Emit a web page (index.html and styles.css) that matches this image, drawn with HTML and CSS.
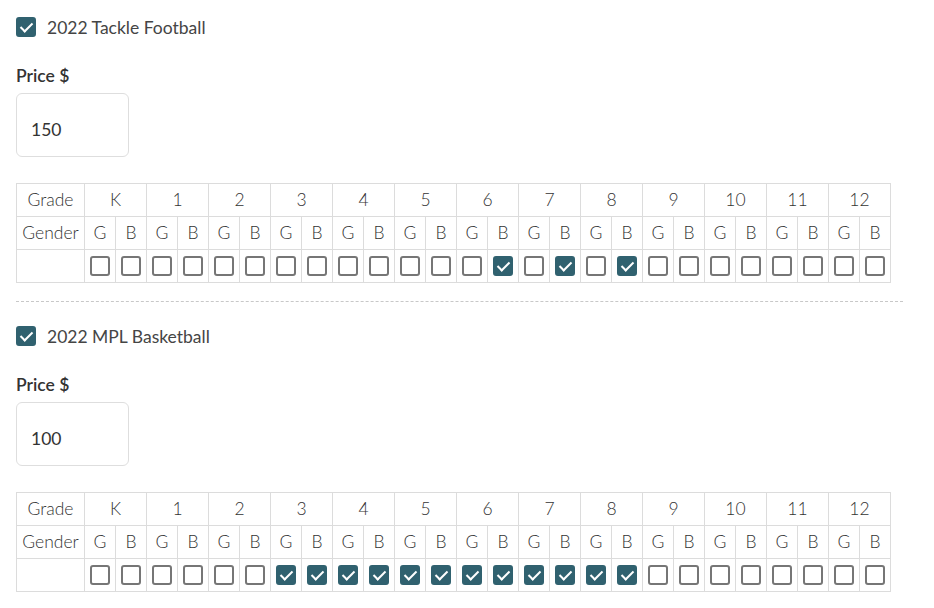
FILE: index.html
```html
<!DOCTYPE html>
<html lang="en">

<head>
    <meta charset="UTF-8" />
    <meta name="viewport" content="width=device-width, initial-scale=1" />
    <title>Program Pricing</title>
    <link rel="stylesheet" href="styles.css">
</head>

<body>
    <div class="programs">
        <!-- Tackle football -->
        <section class="program">
            <label class="program-check">
                <input type="checkbox" class="check" checked />
                <span>2022 Tackle Football</span>
            </label>
            <label class="price-label" for="price1">Price $</label>
            <input type="text" id="price1" class="price-input" value="150" />
            <table class="grade-table">
                <colgroup>
                    <col class="col-label" />
                    <col span="26" class="col-box" />
                </colgroup>
                <tr>
                    <td>Grade</td>
                    <td colspan="2">K</td>
                    <td colspan="2">1</td>
                    <td colspan="2">2</td>
                    <td colspan="2">3</td>
                    <td colspan="2">4</td>
                    <td colspan="2">5</td>
                    <td colspan="2">6</td>
                    <td colspan="2">7</td>
                    <td colspan="2">8</td>
                    <td colspan="2">9</td>
                    <td colspan="2">10</td>
                    <td colspan="2">11</td>
                    <td colspan="2">12</td>
                </tr>
                <tr>
                    <td>Gender</td>
                    <td>G</td><td>B</td><td>G</td><td>B</td><td>G</td><td>B</td><td>G</td><td>B</td>
                    <td>G</td><td>B</td><td>G</td><td>B</td><td>G</td><td>B</td><td>G</td><td>B</td>
                    <td>G</td><td>B</td><td>G</td><td>B</td><td>G</td><td>B</td><td>G</td><td>B</td>
                    <td>G</td><td>B</td>
                </tr>
                <tr class="box-row">
                    <td></td>
                    <td><input type="checkbox" class="check" /></td>
                    <td><input type="checkbox" class="check" /></td>
                    <td><input type="checkbox" class="check" /></td>
                    <td><input type="checkbox" class="check" /></td>
                    <td><input type="checkbox" class="check" /></td>
                    <td><input type="checkbox" class="check" /></td>
                    <td><input type="checkbox" class="check" /></td>
                    <td><input type="checkbox" class="check" /></td>
                    <td><input type="checkbox" class="check" /></td>
                    <td><input type="checkbox" class="check" /></td>
                    <td><input type="checkbox" class="check" /></td>
                    <td><input type="checkbox" class="check" /></td>
                    <td><input type="checkbox" class="check" /></td>
                    <td><input type="checkbox" class="check" checked /></td>
                    <td><input type="checkbox" class="check" /></td>
                    <td><input type="checkbox" class="check" checked /></td>
                    <td><input type="checkbox" class="check" /></td>
                    <td><input type="checkbox" class="check" checked /></td>
                    <td><input type="checkbox" class="check" /></td>
                    <td><input type="checkbox" class="check" /></td>
                    <td><input type="checkbox" class="check" /></td>
                    <td><input type="checkbox" class="check" /></td>
                    <td><input type="checkbox" class="check" /></td>
                    <td><input type="checkbox" class="check" /></td>
                    <td><input type="checkbox" class="check" /></td>
                    <td><input type="checkbox" class="check" /></td>
                </tr>
            </table>
        </section>

        <hr class="divider" />

        <!-- Basketball -->
        <section class="program">
            <label class="program-check">
                <input type="checkbox" class="check" checked />
                <span>2022 MPL Basketball</span>
            </label>
            <label class="price-label" for="price2">Price $</label>
            <input type="text" id="price2" class="price-input" value="100" />
            <table class="grade-table">
                <colgroup>
                    <col class="col-label" />
                    <col span="26" class="col-box" />
                </colgroup>
                <tr>
                    <td>Grade</td>
                    <td colspan="2">K</td>
                    <td colspan="2">1</td>
                    <td colspan="2">2</td>
                    <td colspan="2">3</td>
                    <td colspan="2">4</td>
                    <td colspan="2">5</td>
                    <td colspan="2">6</td>
                    <td colspan="2">7</td>
                    <td colspan="2">8</td>
                    <td colspan="2">9</td>
                    <td colspan="2">10</td>
                    <td colspan="2">11</td>
                    <td colspan="2">12</td>
                </tr>
                <tr>
                    <td>Gender</td>
                    <td>G</td><td>B</td><td>G</td><td>B</td><td>G</td><td>B</td><td>G</td><td>B</td>
                    <td>G</td><td>B</td><td>G</td><td>B</td><td>G</td><td>B</td><td>G</td><td>B</td>
                    <td>G</td><td>B</td><td>G</td><td>B</td><td>G</td><td>B</td><td>G</td><td>B</td>
                    <td>G</td><td>B</td>
                </tr>
                <tr class="box-row">
                    <td></td>
                    <td><input type="checkbox" class="check" /></td>
                    <td><input type="checkbox" class="check" /></td>
                    <td><input type="checkbox" class="check" /></td>
                    <td><input type="checkbox" class="check" /></td>
                    <td><input type="checkbox" class="check" /></td>
                    <td><input type="checkbox" class="check" /></td>
                    <td><input type="checkbox" class="check" checked /></td>
                    <td><input type="checkbox" class="check" checked /></td>
                    <td><input type="checkbox" class="check" checked /></td>
                    <td><input type="checkbox" class="check" checked /></td>
                    <td><input type="checkbox" class="check" checked /></td>
                    <td><input type="checkbox" class="check" checked /></td>
                    <td><input type="checkbox" class="check" checked /></td>
                    <td><input type="checkbox" class="check" checked /></td>
                    <td><input type="checkbox" class="check" checked /></td>
                    <td><input type="checkbox" class="check" checked /></td>
                    <td><input type="checkbox" class="check" checked /></td>
                    <td><input type="checkbox" class="check" checked /></td>
                    <td><input type="checkbox" class="check" /></td>
                    <td><input type="checkbox" class="check" /></td>
                    <td><input type="checkbox" class="check" /></td>
                    <td><input type="checkbox" class="check" /></td>
                    <td><input type="checkbox" class="check" /></td>
                    <td><input type="checkbox" class="check" /></td>
                    <td><input type="checkbox" class="check" /></td>
                    <td><input type="checkbox" class="check" /></td>
                </tr>
            </table>
        </section>
    </div>
</body>
</html>
```

FILE: styles.css
```css
* {
    box-sizing: border-box;
}

body {
    font-family: Lato, "Open Sans", sans-serif;
    color: #3b3b3b;
    background: #fff;
    margin: 0;
    padding: 17px 31px 0 16px;
}

.programs {
    width: 887px;
}

.program {
    display: flex;
    flex-direction: column;
    align-items: flex-start;
}

/* custom square checkbox */
.check {
    appearance: none;
    -webkit-appearance: none;
    position: relative;
    width: 20px;
    height: 20px;
    margin: 0;
    border: 2px solid #767676;
    border-radius: 3px;
    background: #fff;
    cursor: pointer;
    flex-shrink: 0;
}

.check:checked {
    background: #30616f;
    border-color: #30616f;
}

.check:checked::after {
    content: "";
    position: absolute;
    left: 5px;
    top: 1px;
    width: 5px;
    height: 10px;
    border-right: 2px solid #fff;
    border-bottom: 2px solid #fff;
    transform: rotate(45deg);
}

.program-check {
    display: flex;
    align-items: center;
    gap: 11px;
    height: 20px;
    font-size: 17.5px;
    color: #454545;
    cursor: pointer;
}

.price-label {
    margin-top: 27px;
    line-height: 24px;
    font-size: 17.5px;
    font-weight: 600;
    color: #333;
}

.price-input {
    width: 113px;
    height: 64px;
    margin-top: 5px;
    padding: 8px 14px 0;
    border: 1px solid #dedede;
    border-radius: 6px;
    font-family: inherit;
    font-size: 17.5px;
    color: #333;
    outline: none;
}

.price-input:focus {
    border-color: #30616f;
}

.grade-table {
    margin-top: 26px;
    border-collapse: collapse;
    table-layout: fixed;
    width: 874px;
    font-size: 17.5px;
    font-weight: 300;
    color: #333;
}

.col-label {
    width: 68px;
}

.col-box {
    width: 31px;
}

.grade-table td {
    height: 33px;
    padding: 0 0 2px;
    border: 1px solid #dcdcdc;
    text-align: center;
    vertical-align: middle;
}

.box-row td {
    padding: 0;
    line-height: 0;
}

.box-row .check {
    vertical-align: middle;
}

.divider {
    margin: 18px 0 24px;
    border: none;
    border-top: 1px dashed #c8c8c8;
}
```
